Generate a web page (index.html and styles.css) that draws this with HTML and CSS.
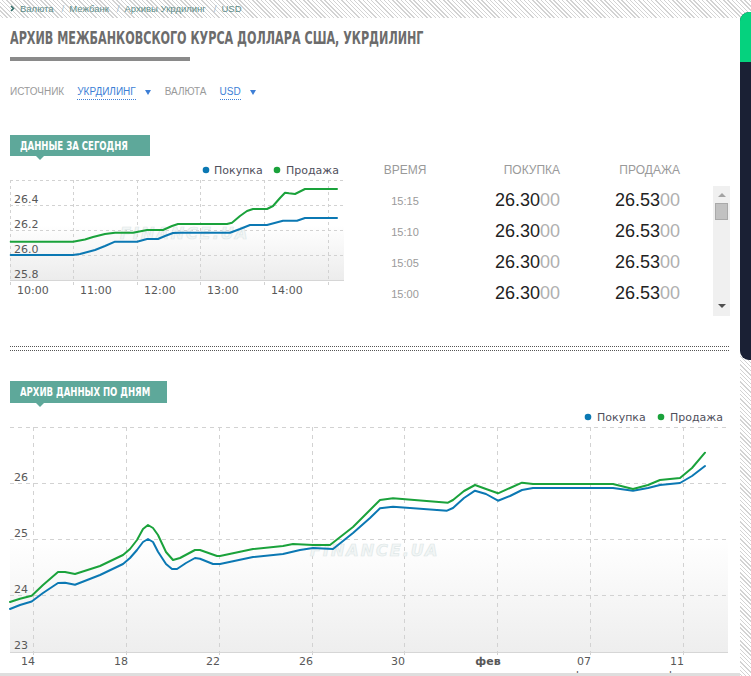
FILE: index.html
```html
<!DOCTYPE html>
<html lang="ru">
<head>
<meta charset="utf-8">
<title>Архив межбанковского курса доллара США, Укрдилинг</title>
<link rel="stylesheet" href="styles.css">
</head>
<body>
<div class="page">
  <div class="main">
    <nav class="crumbs">
      <svg class="crumb-arrow" width="5" height="7" viewBox="0 0 5 7"><path d="M1 1 L3.5 3.5 L1 6" fill="none" stroke="#2f6c68" stroke-width="1.6"/></svg>
      <a class="crumb">Валюта</a><span class="crumb-sep">/</span>
      <a class="crumb">Межбанк</a><span class="crumb-sep">/</span>
      <a class="crumb">Архивы Укрдилинг</a><span class="crumb-sep">/</span>
      <a class="crumb">USD</a>
    </nav>
    <div class="panel">
      <h1 class="title"><span class="narrow">АРХИВ МЕЖБАНКОВСКОГО КУРСА ДОЛЛАРА США, УКРДИЛИНГ</span></h1>
      <div class="title-bar"></div>
      <div class="filters">
        <span class="filter-label">ИСТОЧНИК</span>
        <span class="filter-value">УКРДИЛИНГ</span><span class="caret"></span>
        <span class="filter-label">ВАЛЮТА</span>
        <span class="filter-value">USD</span><span class="caret"></span>
      </div>
      <div class="badge"><span class="narrow">ДАННЫЕ ЗА СЕГОДНЯ</span></div>
      <div class="today">
        <svg class="today-chart" width="350" height="184" viewBox="0 156 350 184">
          <defs>
            <linearGradient id="g1" x1="0" y1="0" x2="0" y2="1">
              <stop offset="0.45" stop-color="#ffffff"/>
              <stop offset="1" stop-color="#ececec"/>
            </linearGradient>
          </defs>
          <rect x="10" y="180" width="334" height="100" fill="url(#g1)"/>
          <g stroke="#d2d2d2" stroke-dasharray="3,3" stroke-width="1">
            <line x1="10" y1="180.5" x2="344" y2="180.5"/>
            <line x1="10" y1="205.5" x2="344" y2="205.5"/>
            <line x1="10" y1="230.5" x2="344" y2="230.5"/>
            <line x1="10" y1="255.5" x2="344" y2="255.5"/>
            <line x1="10.5" y1="180" x2="10.5" y2="286"/>
            <line x1="73.5" y1="180" x2="73.5" y2="286"/>
            <line x1="137.5" y1="180" x2="137.5" y2="286"/>
            <line x1="200.5" y1="180" x2="200.5" y2="286"/>
            <line x1="264.5" y1="180" x2="264.5" y2="286"/>
            <line x1="328.5" y1="180" x2="328.5" y2="286"/>
          </g>
          <line x1="10" y1="280.5" x2="344" y2="280.5" stroke="#d6d6d6"/>
          <text class="wm" x="120" y="239">FINANCE.UA</text>
          <g class="axis">
            <text x="14" y="203">26.4</text>
            <text x="14" y="228">26.2</text>
            <text x="14" y="253">26.0</text>
            <text x="14" y="278">25.8</text>
            <text x="17" y="294">10:00</text>
            <text x="80" y="294">11:00</text>
            <text x="144" y="294">12:00</text>
            <text x="207" y="294">13:00</text>
            <text x="271" y="294">14:00</text>
          </g>
          <polyline class="ln buy" points="10.7,255 73,255 80,254 95,250 105,246 115,241.7 137,241.7 147,239 158,239 165,236 173,233 180,232.7 230,232.7 240,229 250,225 267,225 283,220.7 297,220.7 305,218 337,218"/>
          <polyline class="ln sell" points="10.7,241.7 73,241.7 85,239.5 93,237 105,234 115,232.7 133,232.7 147,230 163,230 172,226 178,224 227,224 232,222.7 240,216 247,211 253,209 267,209 273,206 280,198 285,192.7 289,193.3 295,194 305,189 337,189"/>
          <circle cx="206" cy="170" r="3.3" fill="#0b78b3"/>
          <text class="legend" x="214" y="174">Покупка</text>
          <circle cx="277" cy="170" r="3.3" fill="#1aa23b"/>
          <text class="legend" x="286" y="174">Продажа</text>
        </svg>
        <div class="rates">
          <div class="rates-head">
            <span class="c-time">ВРЕМЯ</span>
            <span class="c-num">ПОКУПКА</span>
            <span class="c-num">ПРОДАЖА</span>
          </div>
          <div class="rates-body">
            <div class="rates-list">
              <div class="rate-row"><span class="c-time t">15:15</span><span class="c-num v">26.30<i>00</i></span><span class="c-num v">26.53<i>00</i></span></div>
              <div class="rate-row"><span class="c-time t">15:10</span><span class="c-num v">26.30<i>00</i></span><span class="c-num v">26.53<i>00</i></span></div>
              <div class="rate-row"><span class="c-time t">15:05</span><span class="c-num v">26.30<i>00</i></span><span class="c-num v">26.53<i>00</i></span></div>
              <div class="rate-row"><span class="c-time t">15:00</span><span class="c-num v">26.30<i>00</i></span><span class="c-num v">26.53<i>00</i></span></div>
            </div>
            <div class="scrollbar">
              <span class="sb-up"></span>
              <span class="sb-thumb"></span>
              <span class="sb-space"></span>
              <span class="sb-down"></span>
            </div>
          </div>
        </div>
      </div>
      <div class="sep"></div>
      <div class="badge badge-archive"><span class="narrow">АРХИВ ДАННЫХ ПО ДНЯМ</span></div>
      <svg class="archive-chart" width="740" height="270" viewBox="0 403 740 270">
        <defs>
          <linearGradient id="g2" x1="0" y1="0" x2="0" y2="1">
            <stop offset="0.5" stop-color="#ffffff"/>
            <stop offset="1" stop-color="#eeeeee"/>
          </linearGradient>
        </defs>
        <rect x="10" y="427" width="718" height="225" fill="url(#g2)"/>
        <g stroke="#d2d2d2" stroke-dasharray="4,4" stroke-width="1">
          <line x1="10" y1="427.5" x2="728" y2="427.5"/>
          <line x1="10" y1="483.5" x2="728" y2="483.5"/>
          <line x1="10" y1="539.5" x2="728" y2="539.5"/>
          <line x1="10" y1="595.5" x2="728" y2="595.5"/>
          <line x1="33.5" y1="427" x2="33.5" y2="657"/>
          <line x1="126.5" y1="427" x2="126.5" y2="657"/>
          <line x1="219.5" y1="427" x2="219.5" y2="657"/>
          <line x1="312.5" y1="427" x2="312.5" y2="657"/>
          <line x1="404.5" y1="427" x2="404.5" y2="657"/>
          <line x1="497.5" y1="427" x2="497.5" y2="657"/>
          <line x1="590.5" y1="427" x2="590.5" y2="657"/>
          <line x1="683.5" y1="427" x2="683.5" y2="657"/>
        </g>
        <line x1="10" y1="652.5" x2="728" y2="652.5" stroke="#d6d6d6"/>
        <text class="wm" x="310" y="556">FINANCE.UA</text>
        <g class="axis">
          <text x="14" y="481">26</text>
          <text x="14" y="537">25</text>
          <text x="14" y="593">24</text>
          <text x="14" y="649">23</text>
        </g>
        <g class="axis mid">
          <text x="28" y="665">14</text>
          <text x="121" y="665">18</text>
          <text x="213" y="665">22</text>
          <text x="306" y="665">26</text>
          <text x="398" y="665">30</text>
          <text class="bold" x="488" y="665">фев</text>
          <text x="584" y="665">07</text>
          <text x="677" y="665">11</text>
          <text x="28" y="679">янв</text>
          <text x="121" y="679">янв</text>
          <text x="213" y="679">янв</text>
          <text x="306" y="679">янв</text>
          <text x="398" y="679">янв</text>
          <text x="584" y="679">фев</text>
          <text x="677" y="679">фев</text>
        </g>
        <polyline class="ln buy" points="10,609 20,605 31.7,601.5 43,593 58,583 65,582.7 75,584.7 100,575 123,564 130,558 137,550 143,542 148,539 153,542 158,551.7 166,564 172,569 177,569 186,563 195,558 200,558.7 213,564 220,564 253,557 283,554 300,550 313,548 333,549 353,533 370,518 380,508.3 393,506.7 447,510.7 453,508 464,498 475,490.7 486,494 498,500.7 510,496 522,490 533,488 613,488 633,490.7 648,488 660,485 680,483 692,476 705,466"/>
        <polyline class="ln sell" points="10,602 20,598.7 31.7,595.7 43,585 58,572 65,572 75,574 100,566 123,555 130,549 137,540 143,529 148,525 153,528 158,535 166,552 173,560 180,558 195,550 200,550 217,556 220,556 253,549 283,546 293,544 313,545 330,545 353,527 370,510 380,500 393,498.3 448,502.7 453,500 464,491 475,485 486,489 498,493.3 510,488 522,482.7 533,484 613,484 633,489 648,485 660,480 680,478 692,468 705,452.7"/>
        <circle cx="588" cy="417" r="3.3" fill="#0b78b3"/>
        <text class="legend" x="597" y="421">Покупка</text>
        <circle cx="661" cy="417" r="3.3" fill="#1aa23b"/>
        <text class="legend" x="670" y="421">Продажа</text>
      </svg>
    </div>
  </div>
  <aside class="side"><div class="side-top"></div></aside>
</div>
</body>
</html>
```
FILE: styles.css
```css
html, body {
  margin: 0;
  padding: 0;
}
body {
  width: 751px;
  height: 676px;
  overflow: hidden;
  font-family: "Liberation Sans", Arial, sans-serif;
  background: repeating-linear-gradient(45deg, #ffffff 0, #ffffff 2px, #d3d3d3 2px, #d3d3d3 3px);
}
.page {
  display: flex;
  align-items: flex-start;
}
.main {
  width: 740px;
  flex: none;
}
.crumbs {
  height: 16px;
  padding: 0 0 2px 10px;
  display: flex;
  align-items: center;
  font-size: 9.5px;
  color: #5d8c88;
}
.crumb-arrow {
  margin-right: 5px;
}
.crumb-sep {
  color: #a7bccb;
  margin: 0 5px 0 8px;
}
.panel {
  background: #fff;
  height: 655px;
  border-bottom: 3px solid #dedede;
  overflow: hidden;
}
.narrow {
  display: inline-block;
  white-space: nowrap;
  transform: scaleX(0.73);
  transform-origin: 0 50%;
}
.title {
  margin: 10px 0 0 10px;
  font: bold 17px/20px "DejaVu Sans Condensed", "DejaVu Sans", sans-serif;
  color: #6c6c6c;
  white-space: nowrap;
}
.title-bar {
  margin: 9px 0 0 10px;
  width: 180px;
  height: 4px;
  background: #8a8a8a;
}
.filters {
  margin: 24px 0 0 10px;
  display: flex;
  align-items: flex-start;
  height: 15px;
  font-size: 10px;
  line-height: 14px;
}
.filter-label {
  color: #9a9a9a;
  margin-right: 13px;
}
.filter-value {
  color: #3d7fd6;
  border-bottom: 1px dotted #3d7fd6;
}
.caret {
  width: 0;
  height: 0;
  border-left: 3.5px solid transparent;
  border-right: 3.5px solid transparent;
  border-top: 5px solid #3d7fd6;
  margin: 5px 14px 0 9px;
}
.badge {
  position: relative;
  margin: 35px 0 0 10px;
  width: 140px;
  height: 21px;
  box-sizing: border-box;
  padding-left: 10px;
  background: #5ea89a;
  color: #fff;
  white-space: nowrap;
  font: bold 13px/21px "DejaVu Sans Condensed", "DejaVu Sans", sans-serif;
}
.badge::after {
  content: "";
  position: absolute;
  left: 26px;
  top: 21px;
  border-left: 4px solid transparent;
  border-right: 4px solid transparent;
  border-top: 4px solid #5ea89a;
}
.badge-archive {
  margin-top: 30px;
  width: 157px;
  height: 22px;
  line-height: 22px;
}
.badge-archive::after {
  top: 22px;
}
.today {
  display: flex;
  height: 184px;
}
.today-chart {
  display: block;
  flex: none;
}
.axis text {
  font: 11px "DejaVu Sans", sans-serif;
  fill: #585858;
}
.axis.mid text {
  text-anchor: middle;
}
.axis .bold {
  font-weight: bold;
}
.legend {
  font: 11px "DejaVu Sans", sans-serif;
  fill: #4f4f5c;
}
.wm {
  font: italic bold 16px "DejaVu Sans", sans-serif;
  fill: #f2f6f6;
  stroke: #dfe8e8;
  stroke-width: 0.7;
  letter-spacing: 2px;
}
.ln {
  fill: none;
  stroke-width: 2;
  stroke-linejoin: round;
  stroke-linecap: round;
}
.buy {
  stroke: #0b78b3;
}
.sell {
  stroke: #1aa23b;
}
.rates {
  margin-left: 20px;
  width: 360px;
  display: flex;
  flex-direction: column;
}
.rates-head {
  height: 28px;
  display: flex;
  align-items: center;
  font-size: 12px;
  color: #9a9a9a;
}
.c-time {
  width: 70px;
  text-align: center;
}
.c-num {
  width: 120px;
  text-align: right;
}
.rates-body {
  display: flex;
}
.rates-list {
  padding-top: 1px;
  width: 310px;
}
.rate-row {
  height: 31px;
  display: flex;
  align-items: center;
}
.t {
  font-size: 11px;
  color: #9a9a9a;
}
.v {
  font-size: 18px;
  color: #222;
}
.v i {
  font-style: normal;
  color: #b0b0b0;
}
.scrollbar {
  margin: 2px 0 0 33px;
  width: 17px;
  height: 130px;
  background: #f0f0f0;
  display: flex;
  flex-direction: column;
  align-items: center;
}
.sb-up {
  margin-top: 7px;
  border-left: 4px solid transparent;
  border-right: 4px solid transparent;
  border-bottom: 4px solid #a3a3a3;
}
.sb-thumb {
  margin-top: 6px;
  width: 11px;
  height: 15px;
  background: #c1c1c1;
  border: 1px solid #a9a9a9;
}
.sb-space {
  flex: 1;
}
.sb-down {
  margin-bottom: 8px;
  border-left: 4px solid transparent;
  border-right: 4px solid transparent;
  border-top: 4px solid #505050;
}
.sep {
  margin: 6px 0 0 10px;
  width: 719px;
  height: 3px;
  border-top: 1px dotted #555;
  border-bottom: 1px dotted #555;
}
.archive-chart {
  display: block;
}
.side {
  flex: none;
  width: 11px;
  height: 348px;
  margin-top: 12px;
  background: #1a2034;
  border-radius: 9px 0 0 9px;
  overflow: hidden;
}
.side-top {
  height: 50px;
  background: #05d27e;
}
```
